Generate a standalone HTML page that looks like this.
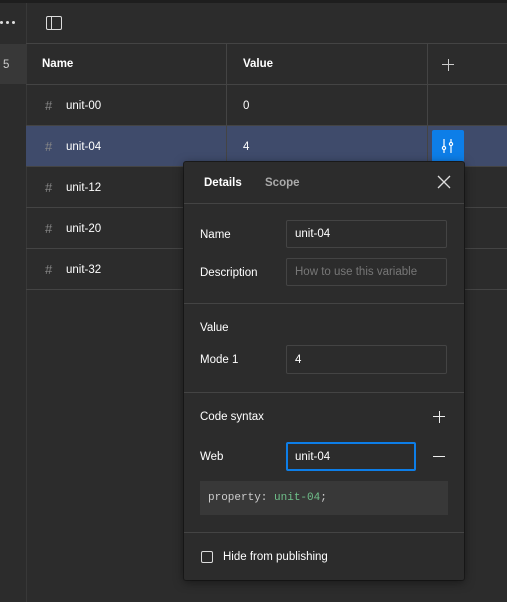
<!DOCTYPE html><html><head><style>
*{box-sizing:border-box;margin:0;padding:0}
body{width:507px;height:602px;background:#2c2c2c;font-family:"Liberation Sans",sans-serif;font-size:11.5px;color:#fff;position:relative;overflow:hidden}
.a{position:absolute}
.hl{position:absolute;height:1px;background:#444}
.vl{position:absolute;width:1px;background:#444}
.inp{position:absolute;border:1px solid #444;border-radius:2px;padding-left:8px;display:flex;align-items:center;font-size:11.5px}
.hash{color:#888;font-size:13px}
</style></head><body>
<div class="a" style="left:0;top:0;width:26px;height:602px;background:#2c2c2c"></div>
<div class="a" style="left:0;top:0;width:507px;height:3px;background:#1e1e1e"></div>
<div class="a" style="left:0;top:44px;width:26px;height:40px;background:#383838"></div>
<div class="a" style="left:0;top:21px;width:3px;height:3px;border-radius:2px;background:#ddd"></div>
<div class="a" style="left:6px;top:21px;width:3px;height:3px;border-radius:2px;background:#ddd"></div>
<div class="a" style="left:12px;top:21px;width:3px;height:3px;border-radius:2px;background:#ddd"></div>
<div class="a" style="left:3px;top:59px;color:#ccc">5</div>
<div class="vl" style="left:26px;top:3px;height:599px;background:#383838"></div>
<div class="a" style="left:46px;top:16px;width:16px;height:14px;border:1.3px solid #ddd;border-radius:2px"></div>
<div class="a" style="left:51px;top:16px;width:1.3px;height:14px;background:#ddd"></div>
<div class="hl" style="left:26px;top:43px;width:481px"></div>
<div class="hl" style="left:26px;top:84px;width:481px"></div>
<div class="hl" style="left:26px;top:125px;width:481px"></div>
<div class="a" style="left:26px;top:126px;width:481px;height:40px;background:#3f4b6b"></div>
<div class="hl" style="left:26px;top:166px;width:481px"></div>
<div class="hl" style="left:26px;top:207px;width:481px"></div>
<div class="hl" style="left:26px;top:248px;width:481px"></div>
<div class="hl" style="left:26px;top:289px;width:481px"></div>
<div class="vl" style="left:226px;top:43px;height:123px"></div>
<div class="vl" style="left:427px;top:43px;height:123px"></div>
<div class="a" style="left:42px;top:58px;font-weight:bold">Name</div>
<div class="a" style="left:243px;top:58px;font-weight:bold">Value</div>
<div class="a" style="left:442px;top:64px;width:12px;height:1.3px;background:#ccc"></div>
<div class="a" style="left:447.5px;top:58.5px;width:1.3px;height:12px;background:#ccc"></div>
<div class="a hash" style="left:45px;top:98px">#</div><div class="a" style="left:66px;top:100px">unit-00</div><div class="a" style="left:243px;top:100px">0</div>
<div class="a hash" style="left:45px;top:139px">#</div><div class="a" style="left:66px;top:141px">unit-04</div><div class="a" style="left:243px;top:141px">4</div>
<div class="a hash" style="left:45px;top:180px">#</div><div class="a" style="left:66px;top:182px">unit-12</div>
<div class="a hash" style="left:45px;top:221px">#</div><div class="a" style="left:66px;top:223px">unit-20</div>
<div class="a hash" style="left:45px;top:262px">#</div><div class="a" style="left:66px;top:264px">unit-32</div>
<div class="a" style="left:432px;top:130px;width:32px;height:32px;background:#0d7ee8;border-radius:2px">
<svg width="32" height="32"><g stroke="#fff" stroke-width="1.2" fill="none"><line x1="12" y1="9" x2="12" y2="16"/><circle cx="12" cy="18" r="1.6"/><line x1="12" y1="20" x2="12" y2="23"/><line x1="19" y1="9" x2="19" y2="12"/><circle cx="19" cy="14" r="1.6"/><line x1="19" y1="16" x2="19" y2="23"/></g></svg></div>
<div class="a" style="left:184px;top:162px;width:280px;height:418px;background:#2c2c2c;border-radius:2px;box-shadow:0 2px 10px rgba(0,0,0,.5),0 0 0 1px #1e1e1e">
<div class="a" style="left:20px;top:15px;font-weight:bold">Details</div>
<div class="a" style="left:81px;top:15px;color:#aaa;font-weight:bold">Scope</div>
<svg class="a" style="left:253px;top:13px" width="14" height="14"><path d="M1 1L13 13M13 1L1 13" stroke="#ddd" stroke-width="1.3"/></svg>
<div class="hl" style="left:0;top:41px;width:280px"></div>
<div class="a" style="left:16px;top:67px">Name</div>
<div class="inp" style="left:102px;top:58px;width:161px;height:28px">unit-04</div>
<div class="a" style="left:16px;top:105px">Description</div>
<div class="inp" style="left:102px;top:96px;width:161px;height:28px;color:#777">How to use this variable</div>
<div class="hl" style="left:0;top:141px;width:280px"></div>
<div class="a" style="left:16px;top:160px">Value</div>
<div class="a" style="left:16px;top:192px">Mode 1</div>
<div class="inp" style="left:102px;top:183px;width:161px;height:29px">4</div>
<div class="hl" style="left:0;top:230px;width:280px"></div>
<div class="a" style="left:16px;top:249px">Code syntax</div>
<div class="a" style="left:249px;top:254px;width:12px;height:1.3px;background:#eee"></div>
<div class="a" style="left:254.5px;top:248.5px;width:1.3px;height:12px;background:#eee"></div>
<div class="a" style="left:16px;top:289px">Web</div>
<div class="inp" style="left:102px;top:280px;width:130px;height:29px;border:2px solid #0d7ee8;padding-left:7px">unit-04</div>
<div class="a" style="left:249px;top:294px;width:12px;height:1.3px;background:#eee"></div>
<div class="a" style="left:16px;top:319px;width:248px;height:34px;background:#383838;font-family:'Liberation Mono',monospace;font-size:11px;color:#ccc;padding:11px 8px">property: <span style="color:#6fbf8a">unit-04</span>;</div>
<div class="hl" style="left:0;top:370px;width:280px"></div>
<div class="a" style="left:17px;top:389px;width:12px;height:12px;border:1.3px solid #ddd;border-radius:2px"></div>
<div class="a" style="left:39px;top:389px">Hide from publishing</div>
</div>
</body></html>
